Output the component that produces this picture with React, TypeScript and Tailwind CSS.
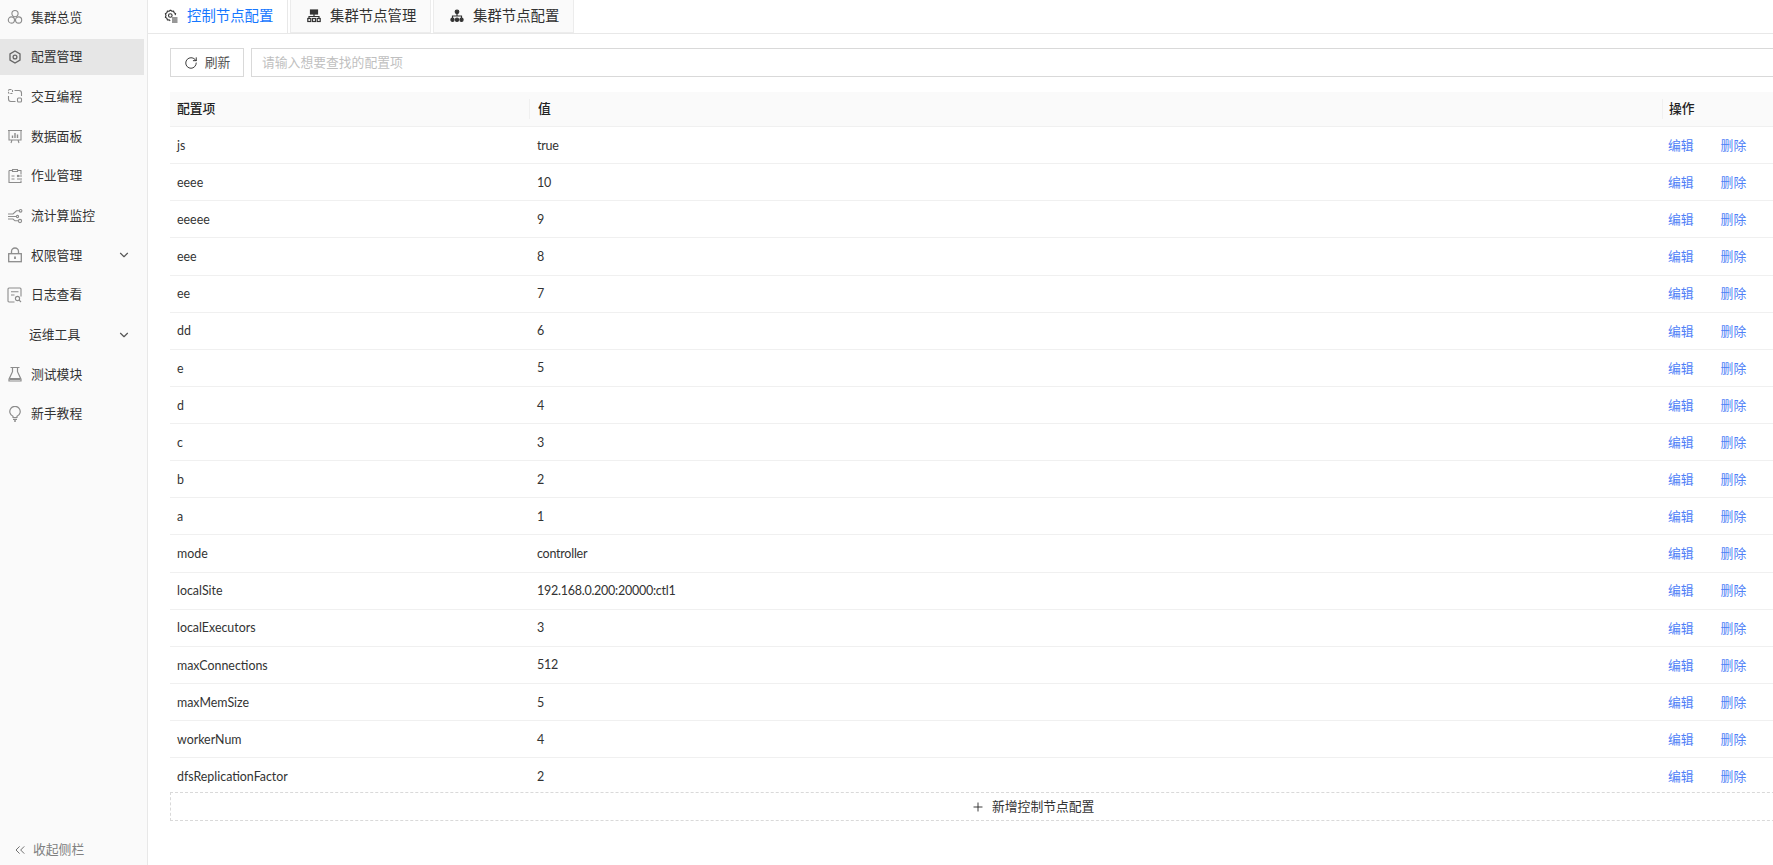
import React from "react";
import { ChevronDown, ChevronsLeft, Plus, RotateCw } from "lucide-react";

const font = "font-['Lato','Noto_Sans_CJK_SC',sans-serif]";

const rows = [
  ["js", "true"],
  ["eeee", "10"],
  ["eeeee", "9"],
  ["eee", "8"],
  ["ee", "7"],
  ["dd", "6"],
  ["e", "5"],
  ["d", "4"],
  ["c", "3"],
  ["b", "2"],
  ["a", "1"],
  ["mode", "controller"],
  ["localSite", "192.168.0.200:20000:ctl1"],
  ["localExecutors", "3"],
  ["maxConnections", "512"],
  ["maxMemSize", "5"],
  ["workerNum", "4"],
  ["dfsReplicationFactor", "2"],
];

const svgProps = {
  viewBox: "0 0 16 16",
  fill: "none",
  stroke: "currentColor",
  strokeWidth: 1.1,
  className: "w-4 h-4",
};

const IconCluster = () => (
  <svg {...svgProps}>
    <circle cx="8" cy="4.6" r="3.1" />
    <circle cx="4.4" cy="11" r="3.1" />
    <circle cx="11.6" cy="11" r="3.1" />
  </svg>
);

const IconConfig = () => (
  <svg {...svgProps} strokeWidth={1.3}>
    <path d="M8 2l5 2.9v6.2L8 14l-5-2.9V4.9z" />
    <circle cx="8" cy="8" r="1.9" />
  </svg>
);

const IconCode = () => (
  <svg {...svgProps}>
    <rect x="1.5" y="1.5" width="4" height="4" rx="1" strokeDasharray="2 1" />
    <rect x="10.5" y="10" width="4" height="4" rx="1" />
    <path d="M7.5 2.5h4.5a2.5 2.5 0 0 1 2.5 2.5v3M8.5 13.5H4a2.5 2.5 0 0 1-2.5-2.5V8" />
  </svg>
);

const IconBoard = () => (
  <svg {...svgProps}>
    <path d="M1 2.5h14M2 2.5v9.5h12V2.5M5 12l-1 3M11 12l1 3" />
    <path d="M5.5 10V7.5M8 10V5M10.5 10V6.5" strokeWidth="1.4" />
  </svg>
);

const IconJob = () => (
  <svg {...svgProps}>
    <path d="M2 2.5h3.5M10.5 2.5H14v4M14 12.5v2H2v-12" />
    <path d="M5.5 1.5h5v2h-5z" />
    <path d="M4.5 8h3M4.5 11h3M10 8h5M10 11h5" />
    <circle cx="11" cy="8" r=".6" />
  </svg>
);

const IconStream = () => (
  <svg {...svgProps}>
    <path d="M1 6h5l3.5-3.2H12M1 8.5h8M1 11h5l2 1.8h3" />
    <circle cx="13.6" cy="2.8" r="1.3" />
    <circle cx="10.5" cy="8.5" r="1.1" />
    <circle cx="13" cy="13" r="1.6" />
  </svg>
);

const IconLock = () => (
  <svg {...svgProps} strokeWidth={1.3}>
    <rect x="1.7" y="6.7" width="12.6" height="8" />
    <path d="M4.5 6.7V4.5a3.5 3.5 0 0 1 7 0v2.2" />
    <path d="M8 9.5v2.5" strokeWidth="1.8" />
  </svg>
);

const IconLog = () => (
  <svg {...svgProps}>
    <path d="M7.5 15H2a1 1 0 0 1-1-1V2a1 1 0 0 1 1-1h11a1 1 0 0 1 1 1v7.5" />
    <path d="M4 4.8h7.5M4 8h3.5" />
    <circle cx="10.5" cy="11.5" r="2.1" />
    <path d="M12 13l2 2" />
  </svg>
);

const IconFlask = () => (
  <svg {...svgProps} strokeWidth={1.2}>
    <path d="M3.5 1.5h9M5.5 1.5v4.2L2 13.2V15h12v-1.8L10.5 5.7V1.5" />
    <path d="M2.5 13h11" strokeWidth="2" />
  </svg>
);

const IconBulb = () => (
  <svg {...svgProps} strokeWidth={1.2}>
    <path d="M6 11.5v-1.2A5.2 5.2 0 1 1 10 10.3v1.2z" />
    <path d="M6 13.3h4M7 15h2" strokeWidth="1.3" />
  </svg>
);

const IconGearDoc = () => (
  <svg viewBox="0 0 14 14" fill="none" stroke="currentColor" strokeWidth="1.1" className="w-[14px] h-[14px]">
    <path d="M6.5 1l1.3 1.2 1.8-.2.5 1.7 1.5 1-.5 1.5M6.5 1L5.2 2.2 3.4 2l-.5 1.7-1.5 1 .6 1.8-.6 1.8 1.5 1 .5 1.7 1.8-.2 1 1" />
    <circle cx="6.3" cy="6.5" r="1.8" />
    <path d="M8 9h5.5M8 11h5.5M8 13h5.5" strokeWidth="1.2" />
  </svg>
);

const IconServers = () => (
  <svg viewBox="0 0 14 14" className="w-[14px] h-[14px]" fill="none" stroke="currentColor" strokeWidth="1.2">
    <rect x="3.5" y="1" width="7" height="4" fill="currentColor" />
    <path d="M7 5v2.500M2 9.500v-2h10v2" />
    <rect x=".8" y="9.5" width="3" height="3" />
    <rect x="5.5" y="9.5" width="3" height="3" />
    <rect x="10.2" y="9.5" width="3" height="3" />
  </svg>
);

const IconTree = () => (
  <svg viewBox="0 0 14 14" className="w-[14px] h-[14px]" fill="none" stroke="currentColor" strokeWidth="1.2">
    <circle cx="7" cy="2.8" r="1.8" fill="currentColor" />
    <path d="M7 4.5v2.500M2.500 9V7h9v2" />
    <circle cx="2.5" cy="10.8" r="1.6" fill="currentColor" />
    <circle cx="7" cy="10.8" r="1.6" fill="currentColor" />
    <circle cx="11.5" cy="10.8" r="1.6" fill="currentColor" />
  </svg>
);

function NavItem({ icon, label, active, arrow }: { icon?: React.ReactNode; label: string; active?: boolean; arrow?: boolean }) {
  return (
    <div className={`flex items-center h-9 mb-[3.7px] mr-[3px] pl-[7px] ${active ? "bg-[#e6e6e6]" : ""}`}>
      <span className={`w-4 h-4 mr-[8px] flex items-center justify-center ${active ? "text-[#666]" : "text-[#8c8c8c]"}`}>{icon}</span>
      <span className={`text-[12.8px] text-[#333] ${icon ? "" : "-ml-[2px]"}`}>{label}</span>
      {arrow && <ChevronDown className="w-[14px] h-[14px] ml-auto mr-[13px] text-[#555]" />}
    </div>
  );
}

function Tab({ icon, label, active }: { icon: React.ReactNode; label: string; active?: boolean }) {
  return (
    <div
      className={`flex items-center h-[34px] -mt-px gap-[9px] text-[14.4px] ${
        active
          ? "w-[140px] pl-[16px] bg-white text-[#1677ff] border-r border-[#e8e8e8]"
          : "w-[141px] pl-[16px] bg-[#fafafa] text-[#333] border border-t-0 border-[#ececec]"
      }`}
    >
      <span className="text-[#333] flex">{icon}</span>
      {label}
    </div>
  );
}

function Row({ name, value }: { name: string; value: string }) {
  return (
    <div className="grid grid-cols-[359px_1139px_1fr] h-[37.13px] pt-px border-b border-[#f0f0f0] items-center text-[12.8px] text-[#333]">
      <div className="pl-[7px] pt-px text-[12.4px]">{name}</div>
      <div className="pl-[8px] pt-px text-[12.5px] tracking-[-0.25px]">{value}</div>
      <div className="flex gap-[27px] text-[#4f7ff7]">
        <span>编辑</span>
        <span>删除</span>
      </div>
    </div>
  );
}

export default function App() {
  return (
    <div className={`${font} flex h-[865px] w-[1773px] overflow-hidden bg-white`}>
      <aside className="w-[148px] shrink-0 bg-[#fafafa] border-r border-[#e8e8e8] flex flex-col -mt-[0.9px]">
        <NavItem icon={<IconCluster />} label="集群总览" />
        <NavItem icon={<IconConfig />} label="配置管理" active />
        <NavItem icon={<IconCode />} label="交互编程" />
        <NavItem icon={<IconBoard />} label="数据面板" />
        <NavItem icon={<IconJob />} label="作业管理" />
        <NavItem icon={<IconStream />} label="流计算监控" />
        <NavItem icon={<IconLock />} label="权限管理" arrow />
        <NavItem icon={<IconLog />} label="日志查看" />
        <NavItem label="运维工具" arrow />
        <NavItem icon={<IconFlask />} label="测试模块" />
        <NavItem icon={<IconBulb />} label="新手教程" />
        <div className="mt-auto flex items-center h-[30px] pl-[12px] gap-[5px] text-[12.8px] text-[#808080]">
          <ChevronsLeft size={16} strokeWidth={1.4} className="text-[#666]" />
          收起侧栏
        </div>
      </aside>

      <main className="flex-1 min-w-0 flex flex-col">
        <div className="flex h-[34px] gap-[2px] border-b border-[#e8e8e8] shrink-0">
          <Tab icon={<IconGearDoc />} label="控制节点配置" active />
          <Tab icon={<IconServers />} label="集群节点管理" />
          <Tab icon={<IconTree />} label="集群节点配置" />
        </div>

        <div className="pl-[22px] flex flex-col min-w-[1700px]">
          <div className="flex gap-[7px] mt-[14px] h-[29px]">
            <button className="w-[74px] border border-[#d9d9d9] flex items-center justify-center gap-[7px] text-[12.8px] text-[#555]">
              <RotateCw size={14} strokeWidth={1.5} className="text-[#222]" />
              刷新
            </button>
            <div className="w-[1560px] border border-[#d9d9d9] pl-[10px] flex items-center text-[12.8px] text-[#bfbfbf]">
              请输入想要查找的配置项
            </div>
          </div>

          <div className="grid grid-cols-[359px_1133px_1fr] items-center h-[35px] mt-[15px] bg-[#fafafa] border-b border-[#f0f0f0] text-[12.8px] font-medium text-[#222]">
            <div className="pl-[7px]">配置项</div>
            <div className="pl-[8px] border-l border-[#f0f0f0]">值</div>
            <div className="pl-[6px] border-l border-[#f0f0f0]">操作</div>
          </div>

          <div className="h-[665px] overflow-hidden">
            {rows.map((r) => (
              <Row key={r[0]} name={r[0]} value={r[1]} />
            ))}
          </div>

          <div className="h-[29px] w-[1660px] border border-dashed border-[#d9d9d9] flex items-center text-[12.8px] text-[#333] pl-[800px] gap-[7px]">
            <Plus size={14} strokeWidth={1.5} className="text-[#222]" />
            新增控制节点配置
          </div>
        </div>
      </main>
    </div>
  );
}
